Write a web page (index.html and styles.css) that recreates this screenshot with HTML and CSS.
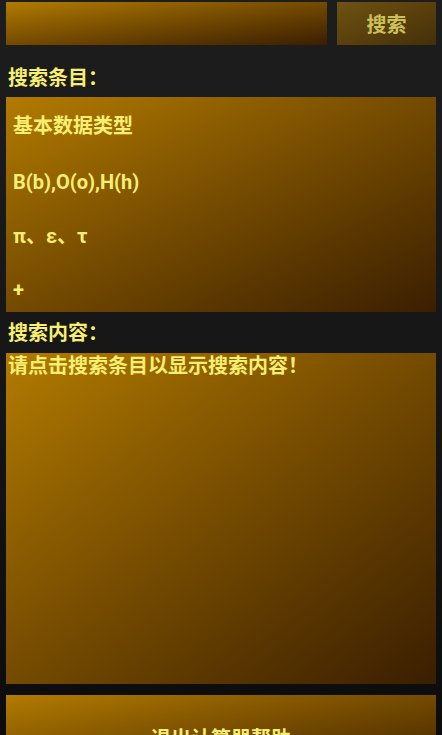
FILE: index.html
```html
<!DOCTYPE html>
<html lang="zh-CN">
<head>
<meta charset="utf-8">
<link rel="stylesheet" href="styles.css">
</head>
<body>
<div class="page">
  <div class="search-row">
    <div class="search-input"></div>
    <div class="search-btn">搜索</div>
  </div>
  <div class="label label-items">搜索条目：</div>
  <div class="list">
    <div class="item item-first">基本数据类型</div>
    <div class="item">B(b),O(o),H(h)</div>
    <div class="item">π、ε、τ</div>
    <div class="item">+</div>
  </div>
  <div class="label label-content">搜索内容：</div>
  <div class="content">请点击搜索条目以显示搜索内容！</div>
  <div class="exit-btn">退出计算器帮助</div>
</div>
</body>
</html>
```
FILE: styles.css
```css
html, body {
  margin: 0;
  padding: 0;
  height: 100%;
}
body {
  background: linear-gradient(to bottom, #1d1d1d 0%, #161616 50%, #0c0c0c 100%);
  font-family: Roboto, "Noto Sans CJK SC", sans-serif;
  font-weight: bold;
  color: #f7ef72;
  overflow: hidden;
}
.page {
  padding: 2px 6px 0 6px;
  display: flex;
  flex-direction: column;
}
.search-row {
  display: flex;
  gap: 10px;
  height: 43px;
}
.search-input {
  flex: 1;
  background: linear-gradient(to bottom right, #b27b00 0%, #7a4f00 45%, #3a1e00 100%);
}
.search-btn {
  width: 99px;
  background: linear-gradient(to bottom right, #6e5313 0%, #5a400c 50%, #43300a 100%);
  color: #cbc05a;
  font-size: 20px;
  display: flex;
  align-items: center;
  justify-content: center;
}
.label {
  font-size: 20px;
  line-height: 24px;
  padding-left: 2px;
}
.label-items {
  margin-top: 21px;
  margin-bottom: 7px;
}
.label-content {
  margin-top: 9px;
  margin-bottom: 8px;
}
.list {
  height: 215px;
  overflow: hidden;
  background: linear-gradient(to bottom right, #b27b00 0%, #7a4f00 45%, #3a1e00 100%);
  display: flex;
  flex-direction: column;
}
.item {
  flex: none;
  height: 54px;
  font-size: 20px;
  line-height: 24px;
  padding-left: 7px;
  display: flex;
  align-items: center;
}
.item-first {
  height: 58px;
}
.content {
  height: 331px;
  box-sizing: border-box;
  padding: 1px 2px 0 2px;
  font-size: 20px;
  line-height: 24px;
  background: linear-gradient(to bottom right, #b27b00 0%, #7a4f00 45%, #3a1e00 100%);
}
.exit-btn {
  margin-top: 11px;
  height: 84px;
  flex: none;
  display: flex;
  align-items: center;
  justify-content: center;
  font-size: 20px;
  background: linear-gradient(to bottom right, #b27b00 0%, #7a4f00 45%, #3a1e00 100%);
}
```
